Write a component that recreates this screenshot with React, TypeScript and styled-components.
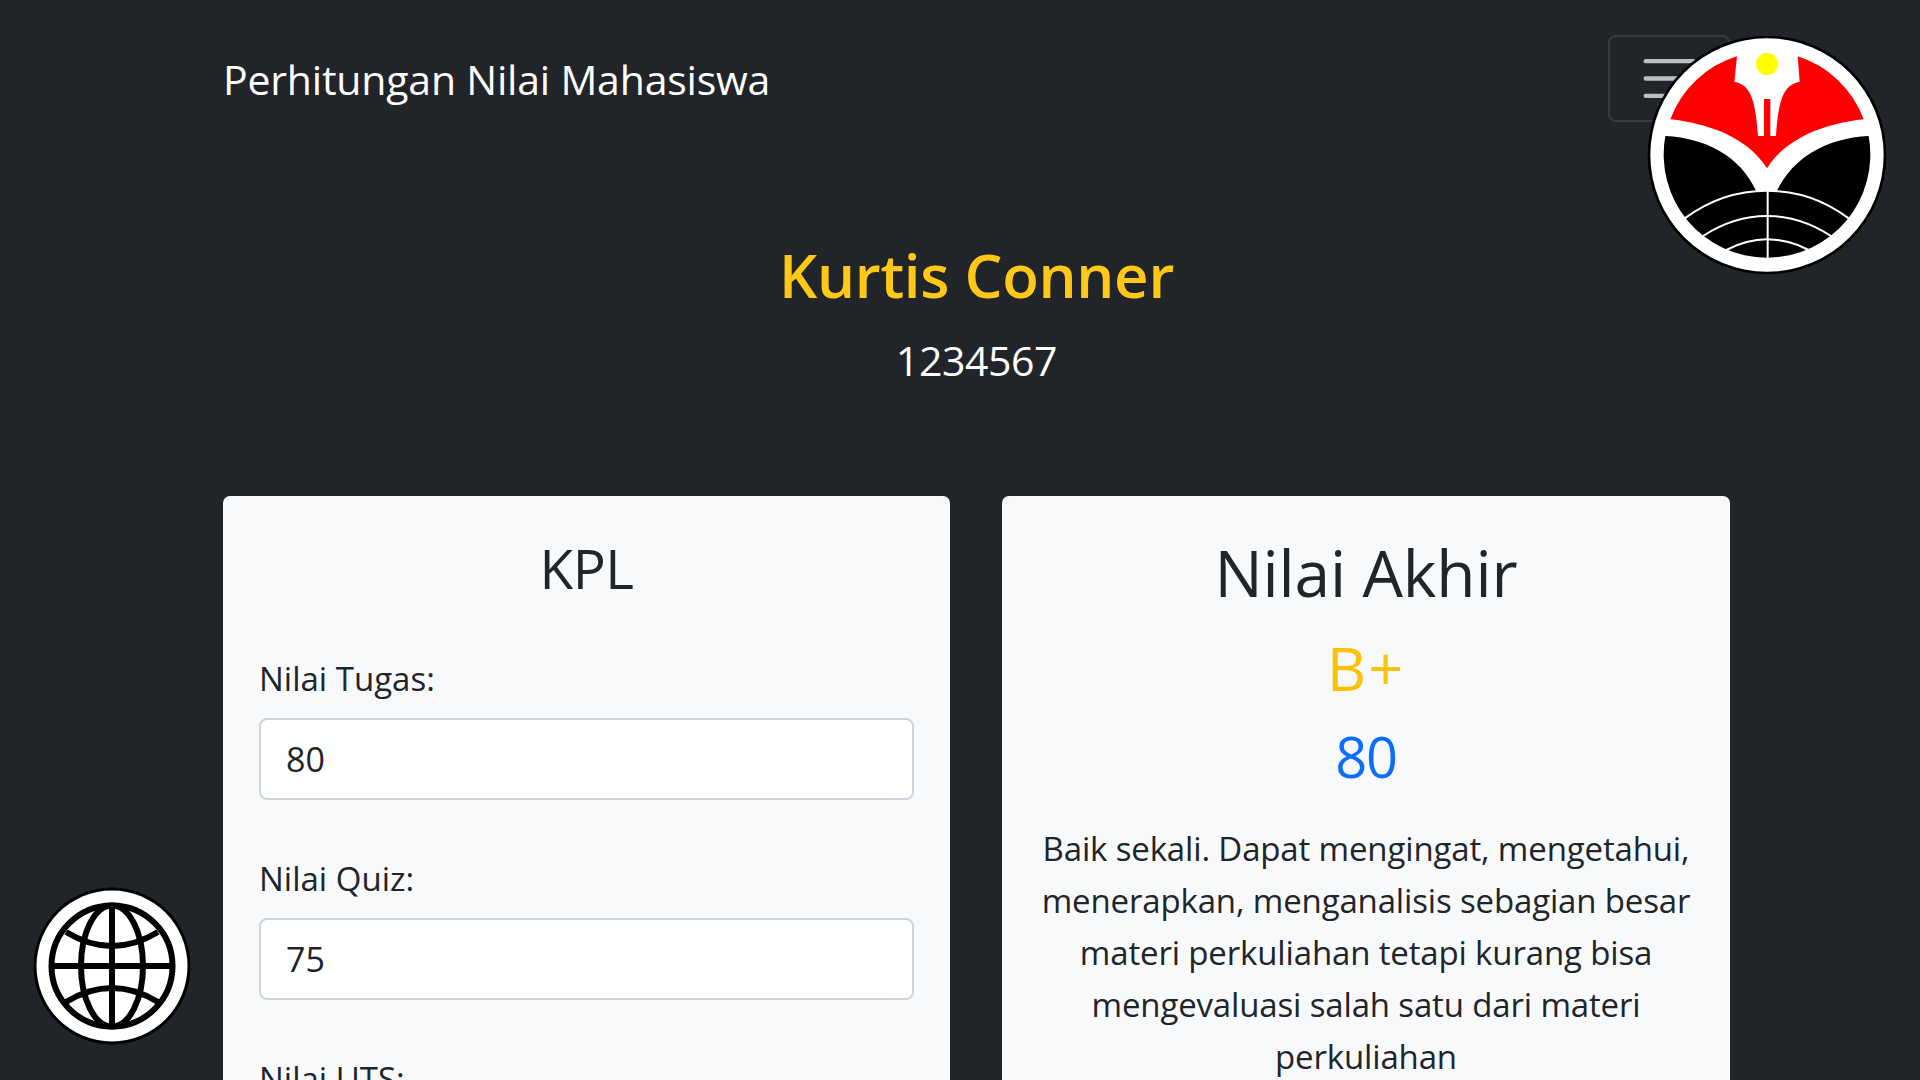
import React from "react";
import styled, { createGlobalStyle } from "styled-components";

const Global = createGlobalStyle`
  html, body { margin: 0; height: 100%; overflow: hidden; background: #212529; }
  body { font-family: "Open Sans", "Noto Sans", "Liberation Sans", sans-serif; color: #212529; }
  * { box-sizing: border-box; }
`;

const Page = styled.div`
  height: 1080px;
  overflow: hidden;
  background: #212529;
  padding: 0 190px 0 223px;
`;

const NavBar = styled.nav`
  display: flex;
  align-items: center;
  justify-content: space-between;
  height: 156px;
  padding-top: 2px;
`;

const Brand = styled.a`
  font-size: 41px;
  letter-spacing: -0.2px;
  color: #fff;
`;

const Toggler = styled.button`
  width: 122px;
  height: 87px;
  margin-top: -2px;
  padding: 0;
  display: flex;
  align-items: center;
  justify-content: center;
  background: transparent;
  border: 2px solid rgba(255, 255, 255, 0.1);
  border-radius: 8px;
`;

const Hero = styled.header`
  display: flex;
  flex-direction: column;
  align-items: center;
  padding-top: 79px;
  height: 340px;
`;

const Title = styled.h1`
  margin: 0;
  font-size: 60px;
  line-height: 80px;
  font-weight: 600;
  letter-spacing: -0.3px;
  color: #ffc818;
`;

const Nim = styled.p`
  margin: 16px 0 0;
  font-size: 41px;
  line-height: 58px;
  letter-spacing: -0.4px;
  color: #fff;
`;

const Columns = styled.main`
  display: grid;
  grid-template-columns: 727px 728px;
  gap: 52px;
  align-items: start;
`;

const Card = styled.section`
  background: #f8f9fa;
  border-radius: 7px;
  padding: 36px;
  min-height: 900px;
`;

const CardTitle = styled.h2`
  margin: 3px 0 0;
  text-align: center;
  font-weight: 400;
  color: #212529;
  font-size: 55px;
  line-height: 66px;
  letter-spacing: -0.5px;
`;

const Field = styled.div`
  display: flex;
  flex-direction: column;
  margin-bottom: 53px;
  &:first-of-type { margin-top: 52px; }
`;

const Label = styled.label`
  font-size: 33px;
  line-height: 52px;
  margin-bottom: 13px;
`;

const Input = styled.input`
  height: 82px;
  width: 100%;
  padding: 0 25px;
  border: 2px solid #ced4da;
  border-radius: 8px;
  background: #fff;
  color: #212529;
  font: inherit;
  font-size: 34px;
  outline: none;
`;

const ResultHead = styled.h2`
  margin: 3px 0 0;
  text-align: center;
  font-weight: 400;
  font-size: 64px;
  line-height: 76px;
  letter-spacing: -0.15px;
`;

const Grade = styled.div<{ $color: string; $size: number; $spacing: number; $gap: number }>`
  margin-top: ${(p) => p.$gap}px;
  text-align: center;
  font-weight: 400;
  font-size: ${(p) => p.$size}px;
  line-height: 72px;
  letter-spacing: ${(p) => p.$spacing}px;
  color: ${(p) => p.$color};
`;

const Description = styled.p`
  margin: 31px 0 0;
  text-align: center;
  font-size: 33px;
  line-height: 52px;
  letter-spacing: -0.15px;
`;

const UpiBadge = styled.svg`
  position: fixed;
  top: 35px;
  right: 33px;
  width: 240px;
  height: 240px;
`;

const GlobeBadge = styled.svg`
  position: fixed;
  left: 32px;
  top: 886px;
  width: 160px;
  height: 160px;
`;

const UpiLogo = () => (
  <UpiBadge viewBox="0 0 720 720">
    <circle cx="360" cy="360" r="358" fill="#000" />
    <circle cx="360" cy="360" r="350" fill="#fff" />
    <path
      d="M70 253 A310 310 0 0 1 270 64 L262 140 C310 150 325 190 333 303 L351 303 L351 192 L370 192 L370 303 L387 303 C395 190 410 150 458 140 L452 64 A310 310 0 0 1 650 253 C540 265 420 305 360 400 C300 305 180 265 70 253 Z"
      fill="#ff0000"
    />
    <path
      d="M55 303 C180 310 280 365 327 467 L390 467 C440 365 540 310 665 303 A310 310 0 1 1 55 303 Z"
      fill="#000"
    />
    <g fill="none" stroke="#fff" strokeWidth="6">
      <path d="M362 467 L362 675" />
      <path d="M113 550 Q225 467 360 467 Q495 467 605 550" />
      <path d="M168 603 Q260 543 360 543 Q460 543 552 603" />
      <path d="M238 645 Q300 613 360 613 Q425 613 485 645" />
    </g>
    <circle cx="360" cy="87" r="33" fill="#ffff00" />
  </UpiBadge>
);

const GlobeLogo = () => (
  <GlobeBadge viewBox="0 0 160 160">
    <circle cx="80" cy="80" r="78.5" fill="#000" />
    <circle cx="80" cy="80" r="75.5" fill="#fff" />
    <g fill="none" stroke="#000" strokeWidth="6">
      <circle cx="80" cy="80" r="60.5" />
      <ellipse cx="80" cy="80" rx="31" ry="60.5" />
      <path d="M80 20 L80 140 M20 80 L140 80" />
      <path d="M34 46 Q80 74 126 46" />
      <path d="M34 116 Q80 88 126 116" />
    </g>
  </GlobeBadge>
);

export default function App() {
  return (
    <>
      <Global />
      <Page>
        <NavBar>
          <Brand>Perhitungan Nilai Mahasiswa</Brand>
          <Toggler aria-label="menu">
            <svg width="65" height="65" viewBox="0 0 30 30">
              <path
                d="M4 7h22M4 15h22M4 23h22"
                stroke="rgba(255,255,255,0.7)"
                strokeWidth="2"
                strokeLinecap="round"
              />
            </svg>
          </Toggler>
        </NavBar>
        <Hero>
          <Title>Kurtis Conner</Title>
          <Nim>1234567</Nim>
        </Hero>
        <Columns>
          <Card>
            <CardTitle>KPL</CardTitle>
            <Field>
              <Label>Nilai Tugas:</Label>
              <Input defaultValue="80" />
            </Field>
            <Field>
              <Label>Nilai Quiz:</Label>
              <Input defaultValue="75" />
            </Field>
            <Field>
              <Label>Nilai UTS:</Label>
              <Input defaultValue="80" />
            </Field>
          </Card>
          <Card>
            <ResultHead>Nilai Akhir</ResultHead>
            <Grade $color="#ffc107" $size={61} $spacing={2} $gap={21}>B+</Grade>
            <Grade $color="#0d6efd" $size={56} $spacing={-1.2} $gap={16}>80</Grade>
            <Description>
              Baik sekali. Dapat mengingat, mengetahui, menerapkan, menganalisis sebagian besar materi perkuliahan
              tetapi kurang bisa mengevaluasi salah satu dari materi perkuliahan
            </Description>
          </Card>
        </Columns>
      </Page>
      <UpiLogo />
      <GlobeLogo />
    </>
  );
}
